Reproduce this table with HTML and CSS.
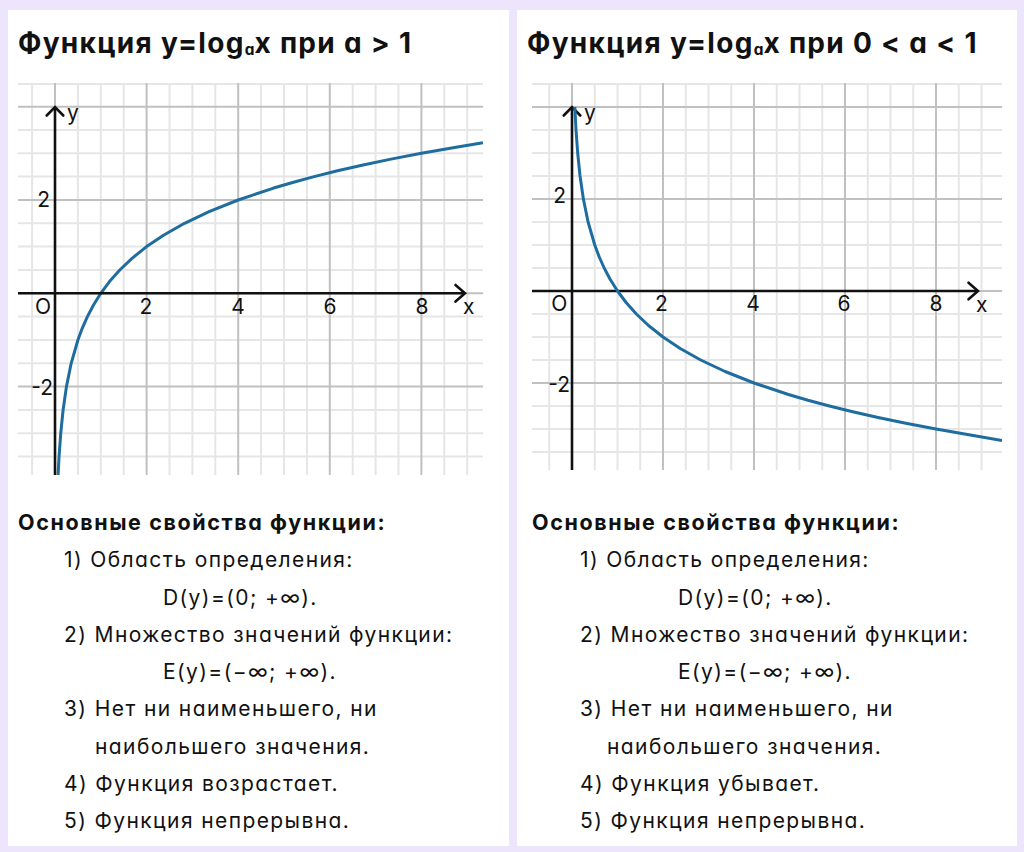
FILE: index.html
```html
<!DOCTYPE html>
<html lang="ru">
<head>
<meta charset="utf-8">
<title>Логарифмическая функция</title>
<link rel="stylesheet" href="styles.css">
</head>
<body>
<div class="page">
  <section class="card">
    <h2 class="title">Функция y=log<span class="sub">a</span>x при a &gt; 1</h2>
    <svg class="chart chart-left" width="465" height="392" viewBox="0 0 465 392">
      <g class="minor">
        <line x1="14.1" y1="0" x2="14.1" y2="392"/>
        <line x1="59.9" y1="0" x2="59.9" y2="392"/>
        <line x1="82.8" y1="0" x2="82.8" y2="392"/>
        <line x1="105.7" y1="0" x2="105.7" y2="392"/>
        <line x1="151.5" y1="0" x2="151.5" y2="392"/>
        <line x1="174.4" y1="0" x2="174.4" y2="392"/>
        <line x1="197.3" y1="0" x2="197.3" y2="392"/>
        <line x1="243.1" y1="0" x2="243.1" y2="392"/>
        <line x1="266" y1="0" x2="266" y2="392"/>
        <line x1="288.9" y1="0" x2="288.9" y2="392"/>
        <line x1="334.7" y1="0" x2="334.7" y2="392"/>
        <line x1="357.6" y1="0" x2="357.6" y2="392"/>
        <line x1="380.5" y1="0" x2="380.5" y2="392"/>
        <line x1="426.3" y1="0" x2="426.3" y2="392"/>
        <line x1="449.2" y1="0" x2="449.2" y2="392"/>
        <line x1="0" y1="1" x2="465" y2="1"/>
        <line x1="0" y1="47" x2="465" y2="47"/>
        <line x1="0" y1="70.3" x2="465" y2="70.3"/>
        <line x1="0" y1="93.6" x2="465" y2="93.6"/>
        <line x1="0" y1="140.3" x2="465" y2="140.3"/>
        <line x1="0" y1="163.6" x2="465" y2="163.6"/>
        <line x1="0" y1="187" x2="465" y2="187"/>
        <line x1="0" y1="233.6" x2="465" y2="233.6"/>
        <line x1="0" y1="257" x2="465" y2="257"/>
        <line x1="0" y1="280.3" x2="465" y2="280.3"/>
        <line x1="0" y1="327" x2="465" y2="327"/>
        <line x1="0" y1="350.3" x2="465" y2="350.3"/>
        <line x1="0" y1="373.6" x2="465" y2="373.6"/>
      </g>
      <g class="major">
        <line x1="37" y1="0" x2="37" y2="392"/>
        <line x1="128.6" y1="0" x2="128.6" y2="392"/>
        <line x1="220.2" y1="0" x2="220.2" y2="392"/>
        <line x1="311.8" y1="0" x2="311.8" y2="392"/>
        <line x1="403.4" y1="0" x2="403.4" y2="392"/>
        <line x1="0" y1="23.7" x2="465" y2="23.7"/>
        <line x1="0" y1="117" x2="465" y2="117"/>
        <line x1="0" y1="210.3" x2="465" y2="210.3"/>
        <line x1="0" y1="303.6" x2="465" y2="303.6"/>
      </g>
      <path class="curve" d="M40.09 392 L41.05 373.6 L42.73 350.3 L45.1 327 L48.45 303.6 L53.19 280.3 L59.9 257 L64.23 245.3 L69.39 233.6 L75.51 222 L82.8 210.3 L91.47 198.6 L101.77 187 L114.03 175.3 L128.6 163.6 L145.93 152 L166.54 140.3 L191.05 128.6 L220.2 117 L254.86 105.3 L274.6 99.5 L296.09 93.6 L319.5 87.8 L345.1 82 L373 76.1 L403.4 70.3 L436.6 64.5 L465 59.8"/>
      <g class="axis">
        <line x1="37" y1="24.5" x2="37" y2="392"/>
        <line x1="0" y1="210.3" x2="447" y2="210.3"/>
        <polyline points="28.7,32.5 37,24 45.3,32.5"/>
        <polyline points="437.5,202 447,210.3 437.5,218.6"/>
      </g>
      <g class="labels">
        <text x="49" y="37">y</text>
        <text x="445" y="230.5">x</text>
        <text class="mid" x="25" y="230.5">O</text>
        <text class="mid" x="128" y="230.5">2</text>
        <text class="mid" x="220" y="230.5">4</text>
        <text class="mid" x="312" y="230.5">6</text>
        <text class="mid" x="404" y="230.5">8</text>
        <text class="end" x="32" y="124">2</text>
        <text class="end" x="35" y="312">-2</text>
      </g>
    </svg>
    <div class="props">
      <p class="props-head">Основные свойства функции:</p>
      <p class="item">1) Область определения:</p>
      <p class="formula">D(y)=(0; +∞).</p>
      <p class="item">2) Множество значений функции:</p>
      <p class="formula">E(y)=(−∞; +∞).</p>
      <p class="item">3) Нет ни наименьшего, ни</p>
      <p class="cont">наибольшего значения.</p>
      <p class="item">4) Функция возрастает.</p>
      <p class="item">5) Функция непрерывна.</p>
    </div>
  </section>

  <section class="card card-right">
    <h2 class="title">Функция y=log<span class="sub">a</span>x при 0 &lt; a &lt; 1</h2>
    <svg class="chart chart-right" width="470" height="387" viewBox="0 0 470 387">
      <g class="minor">
        <line x1="17.25" y1="0" x2="17.25" y2="387"/>
        <line x1="62.75" y1="0" x2="62.75" y2="387"/>
        <line x1="85.5" y1="0" x2="85.5" y2="387"/>
        <line x1="108.25" y1="0" x2="108.25" y2="387"/>
        <line x1="153.75" y1="0" x2="153.75" y2="387"/>
        <line x1="176.5" y1="0" x2="176.5" y2="387"/>
        <line x1="199.25" y1="0" x2="199.25" y2="387"/>
        <line x1="244.75" y1="0" x2="244.75" y2="387"/>
        <line x1="267.5" y1="0" x2="267.5" y2="387"/>
        <line x1="290.25" y1="0" x2="290.25" y2="387"/>
        <line x1="335.75" y1="0" x2="335.75" y2="387"/>
        <line x1="358.5" y1="0" x2="358.5" y2="387"/>
        <line x1="381.25" y1="0" x2="381.25" y2="387"/>
        <line x1="426.75" y1="0" x2="426.75" y2="387"/>
        <line x1="449.5" y1="0" x2="449.5" y2="387"/>
        <line x1="0" y1="1" x2="470" y2="1"/>
        <line x1="0" y1="47" x2="470" y2="47"/>
        <line x1="0" y1="70" x2="470" y2="70"/>
        <line x1="0" y1="93" x2="470" y2="93"/>
        <line x1="0" y1="139" x2="470" y2="139"/>
        <line x1="0" y1="162" x2="470" y2="162"/>
        <line x1="0" y1="185" x2="470" y2="185"/>
        <line x1="0" y1="231" x2="470" y2="231"/>
        <line x1="0" y1="254" x2="470" y2="254"/>
        <line x1="0" y1="277" x2="470" y2="277"/>
        <line x1="0" y1="323" x2="470" y2="323"/>
        <line x1="0" y1="346" x2="470" y2="346"/>
        <line x1="0" y1="369" x2="470" y2="369"/>
      </g>
      <g class="major">
        <line x1="40" y1="0" x2="40" y2="387"/>
        <line x1="131" y1="0" x2="131" y2="387"/>
        <line x1="222" y1="0" x2="222" y2="387"/>
        <line x1="313" y1="0" x2="313" y2="387"/>
        <line x1="404" y1="0" x2="404" y2="387"/>
        <line x1="0" y1="24" x2="470" y2="24"/>
        <line x1="0" y1="116" x2="470" y2="116"/>
        <line x1="0" y1="208" x2="470" y2="208"/>
        <line x1="0" y1="300" x2="470" y2="300"/>
      </g>
      <g class="axis">
        <line x1="40" y1="24.5" x2="40" y2="387"/>
        <line x1="0" y1="208" x2="446" y2="208"/>
        <polyline points="31.7,32.5 40,24 48.3,32.5"/>
        <polyline points="436.5,199.7 446,208 436.5,216.3"/>
      </g>
      <path class="curve" d="M42.84 24 L44.02 47 L45.69 70 L48.04 93 L51.38 116 L56.09 139 L62.75 162 L67.05 173.5 L72.17 185 L78.26 196.5 L85.5 208 L94.11 219.5 L104.35 231 L116.52 242.5 L131 254 L148.22 265.5 L168.69 277 L193.04 288.5 L222 300 L256.43 311.5 L276.01 317.25 L297.39 323 L320.69 328.75 L346.09 334.5 L373.79 340.25 L404 346 L436.94 351.75 L470 357.5"/>
      <g class="labels">
        <text x="52" y="37">y</text>
        <text x="444" y="228.5">x</text>
        <text class="mid" x="27.3" y="227.5">O</text>
        <text class="mid" x="129.5" y="227.5">2</text>
        <text class="mid" x="221" y="227.5">4</text>
        <text class="mid" x="312" y="227.5">6</text>
        <text class="mid" x="404" y="227.5">8</text>
        <text class="end" x="34" y="120">2</text>
        <text class="end" x="38" y="308.5">-2</text>
      </g>
    </svg>
    <div class="props">
      <p class="props-head">Основные свойства функции:</p>
      <p class="item">1) Область определения:</p>
      <p class="formula">D(y)=(0; +∞).</p>
      <p class="item">2) Множество значений функции:</p>
      <p class="formula">E(y)=(−∞; +∞).</p>
      <p class="item">3) Нет ни наименьшего, ни</p>
      <p class="cont">наибольшего значения.</p>
      <p class="item">4) Функция убывает.</p>
      <p class="item">5) Функция непрерывна.</p>
    </div>
  </section>
</div>
</body>
</html>
```
FILE: styles.css
```css
* { box-sizing: border-box; }

html, body {
  margin: 0;
  padding: 0;
}

body {
  background: #ede5fb;
  font-family: Inter, "Noto Sans", "DejaVu Sans", sans-serif;
  font-feature-settings: "cv11" 1;
  color: #111;
}

.page {
  display: flex;
  gap: 8px;
  padding: 10px 7px 6px 8px;
  height: 852px;
}

.card {
  background: #fff;
  width: 501px;
  height: 836px;
  display: flex;
  flex-direction: column;
}

.card-right {
  width: 500px;
}

.title {
  margin: 0;
  height: 50px;
  flex: none;
  padding: 16px 0 0 10px;
  font-size: 28px;
  line-height: 34px;
  font-weight: 700;
  letter-spacing: 1.3px;
  white-space: nowrap;
}

.sub {
  font-size: 0.55em;
  line-height: 1;
  vertical-align: -2px;
  font-weight: 700;
  letter-spacing: 0;
}

.chart {
  display: block;
  margin-top: 23px;
  margin-left: 10px;
  flex: none;
}

.chart-right {
  margin-left: 15px;
}

.minor line {
  stroke: #e6e6e6;
  stroke-width: 2;
}

.major line {
  stroke: #c0c0c0;
  stroke-width: 2;
}

.axis line,
.axis polyline {
  stroke: #111;
  stroke-width: 2.6;
  fill: none;
}

.axis polyline {
  stroke-linecap: round;
  stroke-linejoin: miter;
}

.curve {
  fill: none;
  stroke: #1f6d9e;
  stroke-width: 3;
  stroke-linejoin: round;
}

.labels text {
  font-family: Inter, "Noto Sans", sans-serif;
  font-size: 21px;
  fill: #111;
}

.labels .mid { text-anchor: middle; }
.labels .end { text-anchor: end; }

.props {
  margin-top: 29px;
  padding-left: 10px;
}

.card-right .props {
  margin-top: 34px;
  padding-left: 15px;
}

.props p {
  margin: 0;
  font-size: 21px;
  line-height: 37.3px;
  letter-spacing: 1.4px;
  white-space: nowrap;
}

.props .props-head {
  font-weight: 700;
  font-size: 21.5px;
  letter-spacing: 1.6px;
}

.props .item {
  padding-left: 46px;
}

.props .formula {
  padding-left: 145px;
}

.props .cont {
  padding-left: 77px;
}

.card-right .props .item { padding-left: 48px; }
.card-right .props .formula { padding-left: 146px; }
.card-right .props .cont { padding-left: 75px; }
```
